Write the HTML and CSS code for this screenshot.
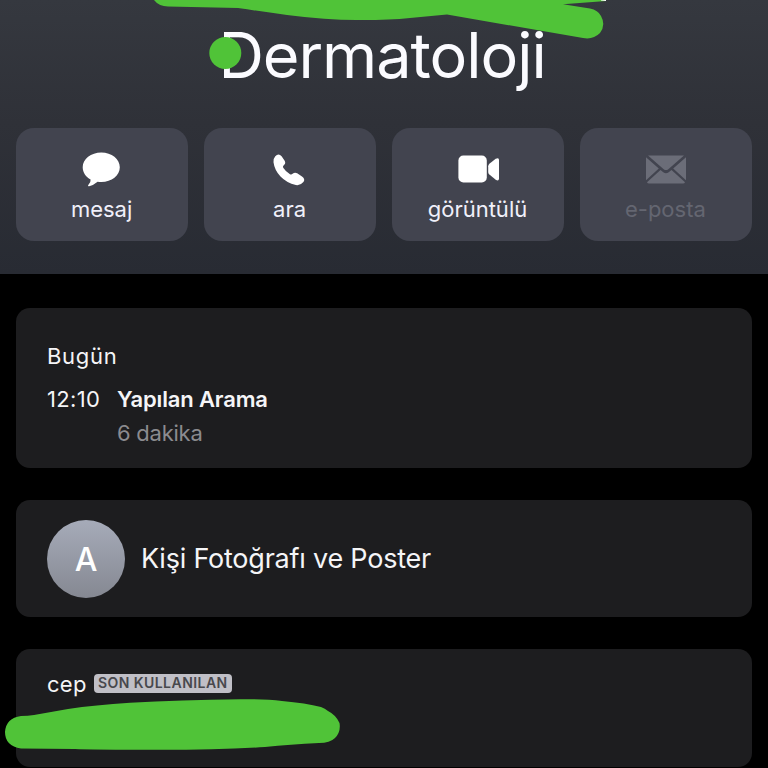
FILE: index.html
```html
<!DOCTYPE html>
<html lang="tr">
<head>
<meta charset="utf-8">
<title>Dermatoloji</title>
<link rel="stylesheet" href="styles.css">
</head>
<body>
<header class="header">
  <h1 class="name">Dermatoloji</h1>
  <nav class="actions">
    <div class="action">
      <svg class="icon" viewBox="0 0 48 36"><path d="M23.300 .5C33.700 .5 41.800 7 41.800 15.300C41.800 23.700 33.700 30 23.300 30Q21.500 30 19.600 29.800Q15.500 33.300 11.200 34.200Q9.300 34.400 10.300 32.900Q13 30.500 12.600 27.500C8 25 4.700 20.700 4.700 15.300C4.700 7 13 .5 23.300 .5Z"/></svg>
      <span class="label">mesaj</span>
    </div>
    <div class="action">
      <svg class="icon" viewBox="0 0 48 36"><path d="M9.300 4.200Q12.600 .8 15.600 4.300L18.500 8.400Q20.100 11 18.200 12.700Q16.300 14.200 17.200 15.800Q19.800 19.900 24 22.200Q25.500 22.800 26.600 21.800Q28.700 19.900 31.200 21.200L36 24.400Q39.600 26.900 37.400 30.100Q34.500 33.800 29.800 33Q20.700 31.100 14.500 24.600Q8.500 18.200 7.500 10.300Q7.100 6.500 9.300 4.200Z"/></svg>
      <span class="label">ara</span>
    </div>
    <div class="action">
      <svg class="icon" viewBox="0 0 48 36"><rect x="4.400" y="3.500" width="28.400" height="27" rx="5"/><path d="M34.200 14.300Q34.200 12.800 35.400 11.800L41.700 6.800Q45 5 45 8V26.500Q45 29.500 41.700 27.800L35.400 22.600Q34.200 21.500 34.200 20Z"/></svg>
      <span class="label">görüntülü</span>
    </div>
    <div class="action disabled">
      <svg class="icon" viewBox="0 0 48 36"><path d="M6 3.500H42L26.300 17.200Q24 19 21.700 17.200ZM4 5.200L16.800 16.500L4 28.300ZM44 5.200V28.300L31.200 16.500ZM18.500 18L21.300 20.300Q24 22.300 26.700 20.300L29.500 18L43 30.200Q42.500 31.500 41 31.500H7Q5.500 31.500 5 30.200Z"/></svg>
      <span class="label">e-posta</span>
    </div>
  </nav>
</header>
<main class="content">
  <section class="card calls">
    <div class="day">Bugün</div>
    <div class="call">
      <span class="time">12:10</span>
      <div>
        <div class="kind">Yapılan Arama</div>
        <div class="duration">6 dakika</div>
      </div>
    </div>
  </section>
  <section class="card poster">
    <div class="avatar">A</div>
    <div class="poster-title">Kişi Fotoğrafı ve Poster</div>
  </section>
  <section class="card phone">
    <span class="phone-type">cep</span>
    <span class="badge">SON KULLANILAN</span>
  </section>
</main>
<svg class="marker" viewBox="0 0 768 768">
  <path d="M154 0Q159 6.500 168 6.500L238 8Q265 12 287 15Q330 20.500 362 20Q390 20 410 18L447 14.500L583 38Q593 40 600 33Q606 25 601 16Q598 10 590 8.500L563 4.200L606 1V0Z"/>
  <circle cx="225.300" cy="53" r="16"/>
  <path d="M21 716Q28 716 34 715L68 709Q95 705 130 702.800Q180 700 240 699.200Q265 699 282 701Q306 703 321 707Q325 708.500 328 711Q336 715 339.500 723Q341 732 335 738Q330 743 319 743Q290 744.500 265 747Q220 749.800 160 749.800Q90 749.800 75 749L21 748.500Q5 746 5 732Q6 718 21 716Z"/>
  <path class="speck" d="M601 0H606V1L601 .6Z"/>
</svg>
</body>
</html>
```
FILE: styles.css
```css
* { box-sizing: border-box; }

body {
  margin: 0;
  height: 768px;
  overflow: hidden;
  background: #000;
  color: #f5f5f7;
  font-family: Inter, "Liberation Sans", sans-serif;
}

.header {
  height: 274px;
  padding: 23px 16px 0;
  background: linear-gradient(#35383f, #2f3138 45%, #282b33);
}

.name {
  margin: 0 0 40.500px;
  padding-right: 4px;
  text-align: center;
  font-size: 63px;
  line-height: 64px;
  font-weight: 400;
  letter-spacing: -1.050px;
  color: #fbfbff;
}

.actions {
  display: grid;
  grid-template-columns: repeat(4, 1fr);
  gap: 15.700px;
}

.action {
  display: flex;
  flex-direction: column;
  align-items: center;
  gap: 7px;
  height: 113.500px;
  padding-top: 24px;
  border-radius: 18px;
  background: #42444f;
  color: #f0f0fa;
}

.icon {
  width: 48px;
  height: 36px;
  fill: #fff;
}

.label {
  margin-right: 1px;
  font-size: 22px;
  line-height: 28px;
}

.disabled { color: #646671; }
.disabled .icon { fill: #6b6d78; }

.content {
  display: flex;
  flex-direction: column;
  gap: 32px;
  padding: 34px 16px 0;
}

.card {
  border-radius: 14px;
  background: #1d1d1f;
}

.calls {
  height: 160px;
  padding: 34px 31px 0;
  font-size: 22px;
  line-height: 28px;
}

.day { letter-spacing: .700px; }

.call {
  display: grid;
  grid-template-columns: 70px 1fr;
  margin-top: 15px;
}

.time { letter-spacing: .350px; }

.kind {
  font-weight: 600;
  letter-spacing: -.150px;
}

.duration {
  margin-top: 6px;
  color: #8b8b8f;
  letter-spacing: -.250px;
}

.poster {
  display: flex;
  align-items: center;
  gap: 16px;
  height: 117px;
  padding: 0 31px;
}

.avatar {
  width: 78px;
  height: 78px;
  padding-top: 1px;
  border-radius: 50%;
  background: linear-gradient(#a6abb9, #858892);
  color: #fff;
  text-align: center;
  font-size: 32px;
  font-weight: 500;
  line-height: 78px;
}

.poster-title {
  font-size: 27px;
  line-height: 36px;
  letter-spacing: -.220px;
}

.phone {
  display: flex;
  align-items: flex-start;
  gap: 7px;
  height: 118px;
  padding: 21px 31px 0;
}

.phone-type {
  font-size: 22px;
  line-height: 28px;
  letter-spacing: .300px;
}

.badge {
  width: 138px;
  height: 19px;
  margin-top: 3.500px;
  border-radius: 4px;
  background: #c0bfc6;
  color: #48484d;
  text-align: center;
  white-space: nowrap;
  font-size: 14px;
  font-weight: 600;
  line-height: 18px;
  letter-spacing: .450px;
}

.marker {
  position: absolute;
  top: 0;
  left: 0;
  width: 768px;
  height: 768px;
  fill: #50c338;
}

.speck { fill: #fff; }
```
